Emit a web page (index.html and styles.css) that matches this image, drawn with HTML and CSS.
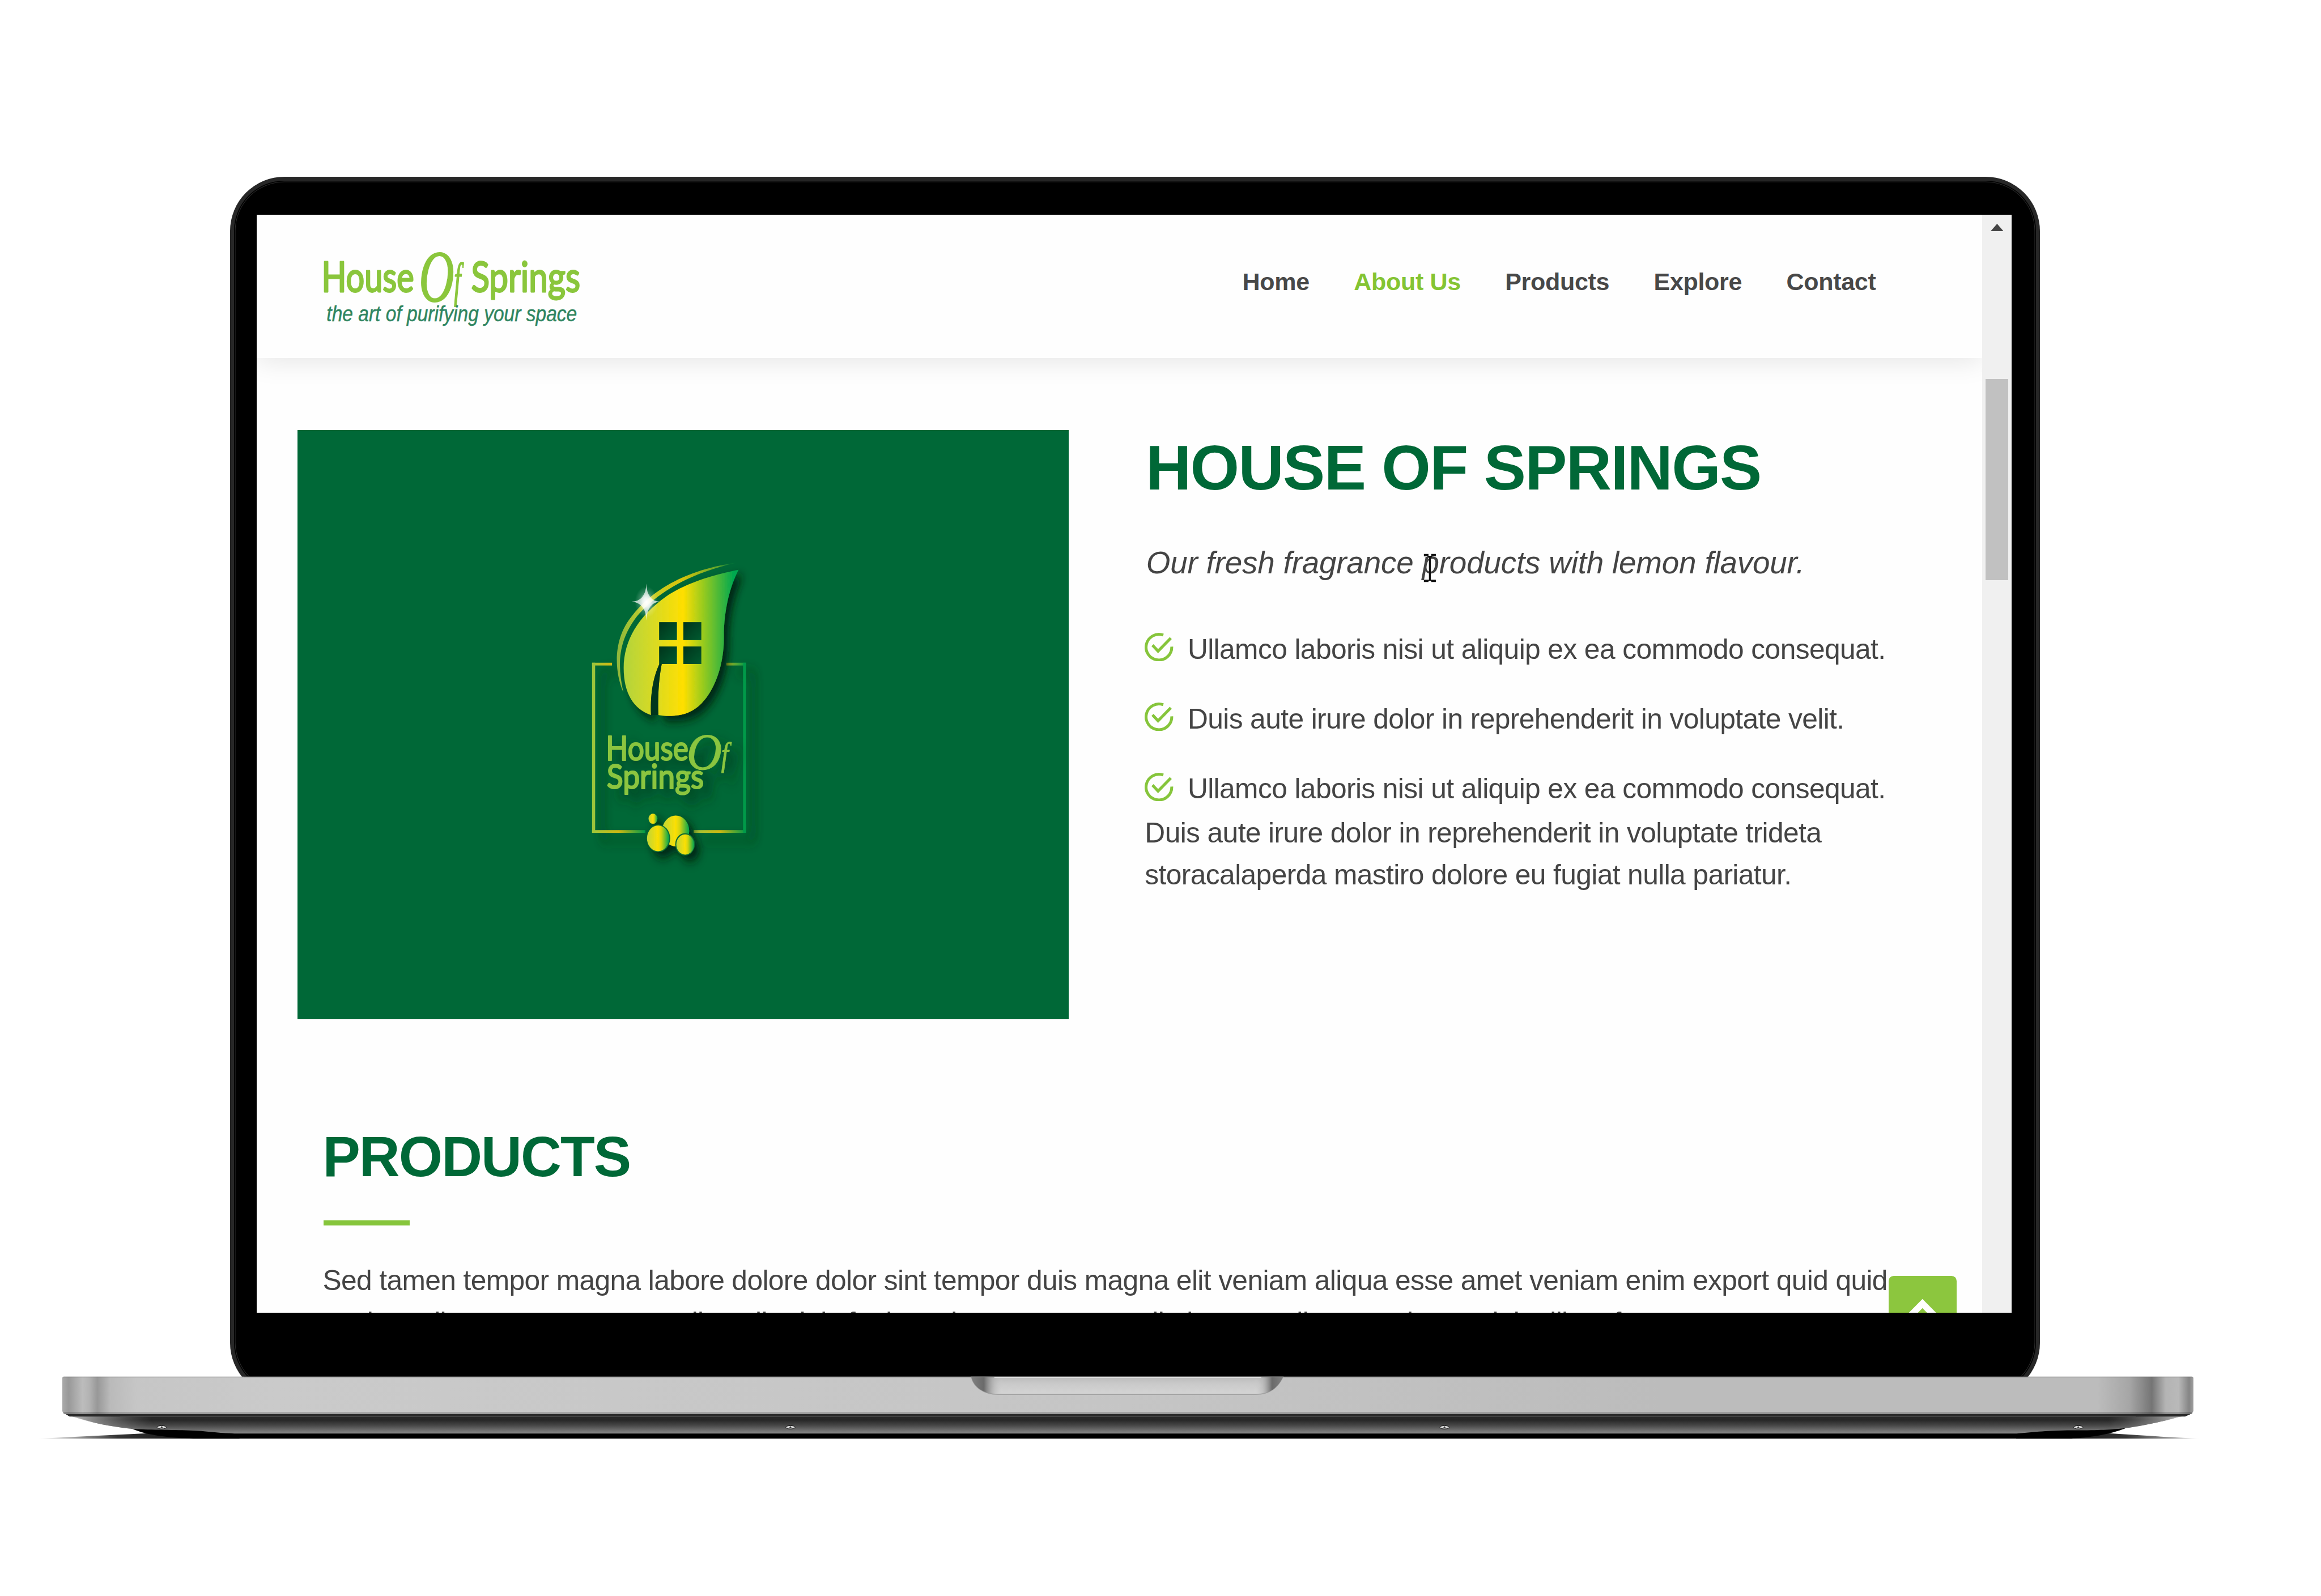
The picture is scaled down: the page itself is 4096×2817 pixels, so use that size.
FILE: index.html
```
<!DOCTYPE html>
<html lang="en">
<head>
<meta charset="utf-8">
<title>House Of Springs</title>
<link rel="stylesheet" href="styles.css">
</head>
<body>
<main class="stage">
  <div class="lid">
    <div class="lid-glass">
      <div class="screen">
        <div class="page">
          <header class="header">
            <svg class="brand" viewBox="700 540 570 180" role="img">
              <g class="brand-name">
                <text x="698" y="633" font-size="90" textLength="201" lengthAdjust="spacingAndGlyphs">House</text>
                <text x="1023" y="633" font-size="90" textLength="237" lengthAdjust="spacingAndGlyphs">Springs</text>
              </g>
              <g class="brand-of">
                <text transform="translate(910 655) scale(.66 1)" font-size="160">O</text>
                <text transform="translate(986 644) scale(.52 1)" font-size="103">f</text>
              </g>
              <text class="brand-tag" x="709" y="698" font-size="48" textLength="544" lengthAdjust="spacingAndGlyphs">the art of purifying your space</text>
            </svg>
            <nav class="nav">
              <a class="nav-link">Home</a>
              <a class="nav-link active">About Us</a>
              <a class="nav-link">Products</a>
              <a class="nav-link">Explore</a>
              <a class="nav-link">Contact</a>
            </nav>
          </header>

          <section class="about">
            <div class="about-image">
              <svg class="emblem" viewBox="0 0 1560 1568" preserveAspectRatio="none">
                <defs>
                  <linearGradient id="leaf" gradientUnits="userSpaceOnUse" x1="465" y1="0" x2="1180" y2="0">
                    <stop offset="0" stop-color="#b3d43c"/><stop offset=".27" stop-color="#d8da24"/><stop offset=".54" stop-color="#ffdf00"/><stop offset=".72" stop-color="#9acb1e"/><stop offset="1" stop-color="#00a850"/>
                  </linearGradient>
                  <linearGradient id="arc" gradientUnits="userSpaceOnUse" x1="415" y1="0" x2="1195" y2="0">
                    <stop offset="0" stop-color="#8db63c"/><stop offset=".25" stop-color="#c4cf2a"/><stop offset=".55" stop-color="#d8c40a"/><stop offset=".85" stop-color="#5fa62c"/><stop offset="1" stop-color="#00883f" stop-opacity=".3"/>
                  </linearGradient>
                  <linearGradient id="ball"><stop offset="0" stop-color="#bfd636"/><stop offset=".5" stop-color="#fbdf04"/><stop offset=".65" stop-color="#d3d40e"/><stop offset="1" stop-color="#00a650"/></linearGradient>
                  <linearGradient id="edge"><stop offset="0" stop-color="#9fc63a"/><stop offset=".5" stop-color="#ccb812"/><stop offset="1" stop-color="#009a4a"/></linearGradient>
                  <linearGradient id="edgeShort"><stop offset="0" stop-color="#9fc63a"/><stop offset="1" stop-color="#d0b810"/></linearGradient>
                  <linearGradient id="edgeEnd"><stop offset="0" stop-color="#a8b420"/><stop offset="1" stop-color="#009a4a"/></linearGradient>
                  <linearGradient id="pane" x2="1" y2="1"><stop offset="0" stop-color="#00341b"/><stop offset="1" stop-color="#005a30"/></linearGradient>
                  <radialGradient id="glow"><stop offset="0" stop-color="#fff"/><stop offset=".3" stop-color="#fff" stop-opacity=".75"/><stop offset=".6" stop-color="#fff" stop-opacity=".2"/><stop offset="1" stop-color="#fff" stop-opacity="0"/></radialGradient>
                  <filter id="deep" x="-20%" y="-20%" width="160%" height="160%"><feDropShadow dx="32" dy="26" stdDeviation="24" flood-color="#001f10" flood-opacity=".9"/></filter>
                  <filter id="soft" x="-20%" y="-20%" width="150%" height="150%"><feDropShadow dx="60" dy="40" stdDeviation="28" flood-color="#00361c" flood-opacity=".75"/></filter>
                </defs>
                <g filter="url(#soft)">
                  <rect x="258" y="565" width="130" height="13" fill="url(#edgeShort)"/>
                  <rect x="258" y="565" width="20" height="805" fill="#9cc43b"/>
                  <rect x="258" y="1357" width="347" height="13" fill="url(#edge)"/>
                  <rect x="920" y="1357" width="341" height="13" fill="url(#edge)"/>
                  <rect x="1133" y="565" width="128" height="13" fill="url(#edgeEnd)"/>
                  <rect x="1242" y="565" width="19" height="805" fill="#009a49"/>
                </g>
                <path filter="url(#deep)" fill="url(#leaf)" d="M1212 125C1060 147 870 187 740 252C560 345 464 460 464 590C464 710 530 785 642 812C636 700 662 625 697 570H712C694 640 686 710 690 812C760 822 830 815 880 802C1010 770 1117 620 1117 450C1115 330 1150 215 1212 125Z"/>
                <path fill="#00361d" d="M642 812C636 700 662 625 697 570H712C694 640 686 710 690 812Z"/>
                <g fill="url(#pane)">
                  <rect x="695" y="373" width="116" height="85"/><rect x="853" y="373" width="117" height="85"/>
                  <rect x="695" y="488" width="116" height="83"/><rect x="853" y="488" width="117" height="83"/>
                </g>
                <path fill="url(#arc)" d="M462 705C400 600 395 450 520 342C660 210 900 120 1200 92C910 138 690 226 550 346C430 460 420 570 462 705Z"/>
                <circle cx="612" cy="278" r="75" fill="url(#glow)"/>
                <path fill="#fff" opacity=".7" d="M612 190Q615 273 700 276Q617 280 612 365Q608 280 515 276Q608 273 612 190Z"/>
                <g filter="url(#soft)" class="emblem-text">
                  <text class="emblem-name" x="348" y="1028" font-size="160" textLength="538" lengthAdjust="spacingAndGlyphs">House</text>
                  <text class="emblem-name" x="354" y="1162" font-size="160" textLength="632" lengthAdjust="spacingAndGlyphs">Springs</text>
                  <text class="emblem-of" transform="translate(874 1070) scale(1.3 1)" font-size="245">O</text>
                  <text class="emblem-of" transform="translate(1100 1052) scale(1.1 1)" font-size="157">f</text>
                </g>
                <g filter="url(#deep)">
                  <ellipse cx="655" cy="1303" rx="29" ry="24" fill="url(#ball)"/>
                  <ellipse cx="803" cy="1361" rx="88" ry="73" fill="url(#ball)"/>
                  <ellipse cx="690" cy="1396" rx="77" ry="65" fill="#0a6a34"/>
                  <ellipse cx="688" cy="1396" rx="72" ry="61" fill="url(#ball)"/>
                  <ellipse cx="864" cy="1424" rx="64" ry="53" fill="#0a6a34"/>
                  <ellipse cx="865" cy="1425" rx="58" ry="48" fill="url(#ball)"/>
                </g>
              </svg>
            </div>
            <div class="about-text">
              <h1 class="about-title">HOUSE OF SPRINGS</h1>
              <p class="about-lead">Our fresh fragrance products with lemon flavour.
                <svg class="caret" viewBox="0 0 28 64"><path d="M1 1H11V5H17V1H27V6H20L16 10V57H27V62H17V59H11V62H1V57H12V10L8 6H1Z"/></svg>
              </p>
              <ul class="checks">
                <li><div class="check-row"><svg class="check" viewBox="0 0 24 24"><path d="M15.7 1.9A10.8 10.8 0 1 0 22.8 11.6M6.6 10.4L11.3 15.4L22 4.4"/></svg>Ullamco laboris nisi ut aliquip ex ea commodo consequat.</div></li>
                <li><div class="check-row"><svg class="check" viewBox="0 0 24 24"><path d="M15.7 1.9A10.8 10.8 0 1 0 22.8 11.6M6.6 10.4L11.3 15.4L22 4.4"/></svg>Duis aute irure dolor in reprehenderit in voluptate velit.</div></li>
                <li><div class="check-row"><svg class="check" viewBox="0 0 24 24"><path d="M15.7 1.9A10.8 10.8 0 1 0 22.8 11.6M6.6 10.4L11.3 15.4L22 4.4"/></svg>Ullamco laboris nisi ut aliquip ex ea commodo consequat.</div>
                Duis aute irure dolor in reprehenderit in voluptate trideta<br>storacalaperda mastiro dolore eu fugiat nulla pariatur.</li>
              </ul>
            </div>
          </section>

          <section class="products">
            <h2 class="products-title">PRODUCTS</h2>
            <div class="rule"></div>
            <p class="products-text">Sed tamen tempor magna labore dolore dolor sint tempor duis magna elit veniam aliqua esse amet veniam enim export quid quid<br>veniam aliqua eram noster malis nulla duis fugiat culpa esse aute nulla ipsum velit export irure minim illum fore</p>
          </section>
          <a class="to-top"><svg viewBox="0 0 148 152"><path d="M37 97L73.5 60L110 97"/></svg></a>
        </div>
        <div class="scrollbar">
          <svg class="scroll-up" viewBox="0 0 28 16"><path d="M0 16L14 0L28 16Z"/></svg>
          <div class="thumb"></div>
        </div>
      </div>
    </div>
  </div>

  <svg class="base" viewBox="80 2985 4740 150">
    <defs>
      <linearGradient id="metal" gradientUnits="userSpaceOnUse" x1="135" y1="0" x2="4765" y2="0">
        <stop offset="0" stop-color="#aaa"/><stop offset=".003" stop-color="#999"/><stop offset=".0095" stop-color="#bcbcbc"/><stop offset=".0125" stop-color="#b4b4b4"/><stop offset=".0165" stop-color="#989898"/><stop offset=".0225" stop-color="#bababa"/><stop offset=".035" stop-color="#c6c6c6"/><stop offset=".1" stop-color="#cacaca"/><stop offset=".5" stop-color="#c5c5c5"/><stop offset=".75" stop-color="#bcbcbc"/><stop offset=".955" stop-color="#bcbcbc"/><stop offset=".97" stop-color="#a6a6a6"/><stop offset=".9805" stop-color="#757575"/><stop offset=".987" stop-color="#b4b4b4"/><stop offset=".993" stop-color="#b9b9b9"/><stop offset=".998" stop-color="#858585"/><stop offset="1" stop-color="#a0a0a0"/>
      </linearGradient>
      <linearGradient id="under" gradientUnits="userSpaceOnUse" x1="0" y1="3072" x2="0" y2="3115">
        <stop offset="0" stop-color="#2c2c2c"/><stop offset=".3" stop-color="#262626"/><stop offset=".6" stop-color="#4a4a4a"/><stop offset="1" stop-color="#8c8c8c"/>
      </linearGradient>
      <linearGradient id="underL"><stop offset="0" stop-color="#bbb"/><stop offset="1" stop-color="#777" stop-opacity="0"/></linearGradient>
      <linearGradient id="underR"><stop offset="0" stop-color="#777" stop-opacity="0"/><stop offset="1" stop-color="#bbb"/></linearGradient>
      <linearGradient id="shL"><stop offset="0" stop-color="#000" stop-opacity="0"/><stop offset=".4" stop-color="#000" stop-opacity=".8"/><stop offset="1"/></linearGradient>
      <linearGradient id="shR"><stop offset="0"/><stop offset=".6" stop-color="#000" stop-opacity=".8"/><stop offset=".85" stop-color="#000" stop-opacity=".4"/><stop offset="1" stop-color="#000" stop-opacity="0"/></linearGradient>
      <linearGradient id="scoop" x2="0" y2="1"><stop offset="0" stop-color="#bcbcbc"/><stop offset=".4" stop-color="#cacaca"/><stop offset="1" stop-color="#d4d4d4"/></linearGradient>
      <linearGradient id="scoopSide"><stop offset="0" stop-color="#808080"/><stop offset=".04" stop-color="#6a6a6a"/><stop offset=".075" stop-color="#aaa" stop-opacity=".4"/><stop offset=".1" stop-color="#ccc" stop-opacity="0"/><stop offset=".91" stop-color="#ccc" stop-opacity="0"/><stop offset=".935" stop-color="#aaa" stop-opacity=".4"/><stop offset=".965" stop-color="#6a6a6a"/><stop offset="1" stop-color="#808080"/></linearGradient>
    </defs>
    <path fill="url(#shL)" d="M80 3125.5L321 3114H520V3125.5Z"/>
    <path fill="url(#shR)" d="M4380 3114H4580L4700 3121.5L4780 3125.5H4380Z"/>
    <path d="M283 3103C310 3115 350 3123 420 3125.5H4500C4560 3122 4595 3112 4618 3103Z"/>
    <path fill="url(#under)" d="M140 3071L151 3077L163 3077.500C200 3092 240 3099 283 3104C330 3107.500 400 3106 437 3109C470 3112 490 3114.500 520 3114.500H4381C4420 3111 4450 3108 4500 3107.500C4560 3108 4590 3106 4617 3103C4665 3096 4700 3088 4735 3077.500L4747 3077L4762 3071Z"/>
    <path fill="url(#underL)" d="M155 3077C200 3092 240 3099 283 3104H330V3077Z"/>
    <path fill="url(#underR)" d="M4580 3077V3106L4617 3103C4665 3096 4700 3088 4740 3077Z"/>
    <path fill="#2a2a2a" d="M140 3071L151 3077.500H4747L4762 3071Z"/>
    <path fill="#585858" d="M260 3077.500H4640V3078.500H260Z"/>
    <path fill="url(#metal)" d="M139 2991H4761Q4765 2991 4765 2995V3066L4761 3072H139L135 3066V2995Q135 2991 139 2991Z"/>
    <rect x="137" y="3067.500" width="4626" height="4.500" fill="#000" opacity=".17"/>
    <rect x="137" y="2991" width="4626" height="1.500" fill="#555" opacity=".5"/>
    <rect x="529" y="2990.500" width="3875" height="1.500" fill="#333"/>
    <path fill="url(#scoop)" stroke="#a2a2a2" stroke-width="2" d="M2110 2992C2116 3014 2136 3029.500 2168 3029.500H2728C2760 3029.500 2776 3014 2787 2992Z"/>
    <path fill="url(#scoopSide)" d="M2110 2992C2116 3014 2136 3029 2168 3029H2728C2760 3029 2776 3014 2787 2992Z"/>
    <rect x="2160" y="2991.500" width="580" height="2" fill="#e6e6e6"/>
    <g fill="#ddd" stroke="#111" stroke-width="1.200">
      <ellipse cx="351" cy="3101" rx="10" ry="3.500"/><ellipse cx="1717" cy="3101" rx="10" ry="3.500"/><ellipse cx="3138" cy="3101" rx="10" ry="3.500"/><ellipse cx="4515" cy="3101" rx="10" ry="3.500"/>
    </g>
    <g fill="#333"><circle cx="351" cy="3101" r="2"/><circle cx="1717" cy="3101" r="2"/><circle cx="3138" cy="3101" r="2"/><circle cx="4515" cy="3101" r="2"/></g>
  </svg>
</main>
</body>
</html>
```
FILE: styles.css
```
:root {
  --u: 0.81238px;
  --green: #006837;
  --lime: #8bc53f;
  --ink: #444;
}
* { box-sizing: border-box; margin: 0; padding: 0; }
body { background: #fff; overflow: hidden; font-family: "Liberation Sans", Arial, sans-serif; color: var(--ink); }
svg { display: block; }

.stage {
  display: flex;
  flex-direction: column;
  align-items: flex-start;
  width: calc(5042 * var(--u));
  height: 2817px;
  padding-top: calc(384 * var(--u));
  overflow: hidden;
}

/* Laptop lid */
.lid {
  flex: none;
  width: calc(3932 * var(--u));
  height: calc(2651 * var(--u));
  margin-left: calc(500 * var(--u));
  padding: calc(9 * var(--u));
  border-radius: calc(118 * var(--u));
  background: #272727;
}
.lid-glass {
  width: 100%;
  height: 100%;
  padding: calc(73 * var(--u)) calc(49 * var(--u)) 0;
  border-radius: calc(109 * var(--u));
  background: #000;
  box-shadow: inset 0 0 0 calc(2 * var(--u)) #000, inset 0 0 0 calc(3.2 * var(--u)) #2b2b2b;
}
.screen {
  position: relative;
  display: flex;
  width: calc(3812 * var(--u));
  height: calc(2386 * var(--u));
  overflow: hidden;
  background: #fefefe;
}
.page {
  position: relative;
  width: calc(3748 * var(--u));
  height: 100%;
  overflow: hidden;
}

/* Laptop base */
.base {
  flex: none;
  position: relative;
  width: calc(4740 * var(--u));
  height: calc(150 * var(--u));
  margin-top: calc(-50 * var(--u));
  margin-left: calc(80 * var(--u));
}

/* Header */
.header {
  display: flex;
  justify-content: space-between;
  height: calc(312 * var(--u));
  padding: calc(74 * var(--u)) calc(231 * var(--u)) 0 calc(142 * var(--u));
  background: #fefefe;
  box-shadow: 0 calc(8 * var(--u)) calc(56 * var(--u)) rgba(0, 0, 0, .1);
}
.brand { width: calc(570 * var(--u)); height: calc(180 * var(--u)); overflow: visible; }
.brand-name { font-family: Lato, sans-serif; font-weight: 400; fill: #8ac63c; stroke: #8ac63c; stroke-width: 3.4; stroke-linejoin: round; }
.brand-of { font-family: "Liberation Serif", serif; font-style: italic; fill: #8ac63c; stroke: #8ac63c; stroke-width: 2.5; stroke-linejoin: round; }
.brand-tag { font-style: italic; fill: #2f8560; stroke: #2f8560; stroke-width: .6; }
.nav {
  display: flex;
  justify-content: space-between;
  width: calc(1376 * var(--u));
  padding-top: calc(33 * var(--u));
}
.nav-link {
  font-size: calc(53 * var(--u));
  line-height: calc(80 * var(--u));
  font-weight: 700;
  letter-spacing: calc(-.4 * var(--u));
  white-space: nowrap;
  color: #484848;
}
.nav-link.active { color: #84c433; }

/* About */
.about {
  display: flex;
  gap: calc(165 * var(--u));
  padding: calc(156 * var(--u)) 0 0 calc(88 * var(--u));
}
.about-image {
  flex: none;
  width: calc(1676 * var(--u));
  height: calc(1280 * var(--u));
  padding: calc(246 * var(--u)) 0 0 calc(554 * var(--u));
  background: var(--green);
}
.emblem { width: calc(520 * var(--u)); height: calc(720 * var(--u)); overflow: visible; }
.emblem-text { fill: var(--lime); stroke: var(--lime); stroke-linejoin: round; }
.emblem-name { font-family: Lato, sans-serif; font-weight: 400; stroke-width: 6; }
.emblem-of { font-family: "Liberation Serif", serif; font-style: italic; stroke-width: 2.5; }
.about-text { flex: none; white-space: nowrap; }
.about-title {
  margin-left: calc(2 * var(--u));
  font-size: calc(137 * var(--u));
  line-height: calc(165 * var(--u));
  letter-spacing: calc(-2.1 * var(--u));
  color: var(--green);
}
.about-lead {
  position: relative;
  margin-top: calc(73.6 * var(--u));
  margin-left: calc(3 * var(--u));
  font-size: calc(67.5 * var(--u));
  line-height: calc(100 * var(--u));
  letter-spacing: calc(-.24 * var(--u));
  font-style: italic;
}
.caret {
  position: absolute;
  left: calc(602 * var(--u));
  top: calc(30 * var(--u));
  width: calc(28 * var(--u));
  height: calc(64 * var(--u));
  fill: #111;
}
.checks {
  display: flex;
  flex-direction: column;
  gap: calc(57 * var(--u));
  margin-top: calc(92 * var(--u));
  list-style: none;
  font-size: calc(61.2 * var(--u));
  line-height: calc(92 * var(--u));
  letter-spacing: calc(-.74 * var(--u));
}
.check-row { display: flex; gap: calc(31 * var(--u)); height: calc(95 * var(--u)); }
.check {
  width: calc(62 * var(--u));
  height: calc(62 * var(--u));
  margin-top: calc(10 * var(--u));
  fill: none;
  stroke: #86c53b;
  stroke-width: 2.4;
}

/* Products */
.products { padding: calc(225 * var(--u)) 0 0 calc(143 * var(--u)); white-space: nowrap; }
.products-title {
  font-size: calc(122.5 * var(--u));
  line-height: calc(151 * var(--u));
  letter-spacing: calc(-2.4 * var(--u));
  color: var(--green);
}
.rule {
  width: calc(187 * var(--u));
  height: calc(12 * var(--u));
  margin: calc(61 * var(--u)) 0 calc(73 * var(--u)) calc(2 * var(--u));
  background: #86c53b;
}
.products-text {
  font-size: calc(61.2 * var(--u));
  line-height: calc(92 * var(--u));
  letter-spacing: calc(-.76 * var(--u));
}

/* Back-to-top button, floating over the page */
.to-top {
  position: absolute;
  left: calc(3544.6 * var(--u));
  top: calc(2306.7 * var(--u));
  width: calc(148 * var(--u));
  height: calc(152 * var(--u));
  border-radius: calc(11 * var(--u));
  background: #8cc63e;
}
.to-top path { fill: none; stroke: #fff; stroke-width: 14; }

/* Scrollbar */
.scrollbar {
  display: flex;
  flex-direction: column;
  align-items: center;
  width: calc(64 * var(--u));
  background: #f0f0f0;
}
.scroll-up {
  width: calc(28 * var(--u));
  height: calc(16 * var(--u));
  margin-top: calc(20 * var(--u));
  fill: #444;
}
.thumb {
  width: calc(49 * var(--u));
  height: calc(437 * var(--u));
  margin-top: calc(322 * var(--u));
  background: #c1c1c1;
}
```
